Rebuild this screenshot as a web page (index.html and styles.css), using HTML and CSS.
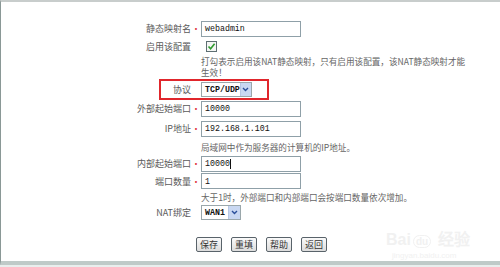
FILE: index.html
```html
<!DOCTYPE html>
<html lang="zh-CN">
<head>
    <meta charset="UTF-8">
    <title>NAT静态映射</title>
    <link rel="stylesheet" href="styles.css">
</head>
<body>
    <div class="frame">
        <div class="form">
            <div class="label">静态映射名</div><div class="star">•</div>
            <div class="field"><span class="input">webadmin</span></div>

            <div class="label">启用该配置</div><div class="star"></div>
            <div class="field">
                <span class="checkbox">
                    <svg width="9" height="9" viewBox="0 0 9 9"><path d="M1.5 4.5 L3.6 6.8 L7.6 1.8" fill="none" stroke="#2f9a2f" stroke-width="1.6"/></svg>
                </span>
            </div>

            <div class="label"></div><div class="star"></div>
            <div class="field help">
                <div class="help-line">打勾表示启用该NAT静态映射，只有启用该配置，该NAT静态映射才能</div>
                <div class="help-line">生效！</div>
            </div>

            <div class="label">协议</div><div class="star"></div>
            <div class="field">
                <span class="select">TCP/UDP<span class="drop"><svg width="7" height="5" viewBox="0 0 7 5"><path d="M1 1 L3.5 3.5 L6 1" fill="none" stroke="#2a4f9a" stroke-width="1.4"/></svg></span></span>
            </div>

            <div class="label">外部起始端口</div><div class="star">•</div>
            <div class="field"><span class="input">10000</span></div>

            <div class="label">IP地址</div><div class="star">•</div>
            <div class="field"><span class="input">192.168.1.101</span></div>

            <div class="label"></div><div class="star"></div>
            <div class="field help"><div class="help-line">局域网中作为服务器的计算机的IP地址。</div></div>

            <div class="label">内部起始端口</div><div class="star">•</div>
            <div class="field"><span class="input">10000<span class="caret"></span></span></div>

            <div class="label">端口数量</div><div class="star">•</div>
            <div class="field"><span class="input">1</span></div>

            <div class="label"></div><div class="star"></div>
            <div class="field help"><div class="help-line">大于1时，外部端口和内部端口会按端口数量依次增加。</div></div>

            <div class="label">NAT绑定</div><div class="star"></div>
            <div class="field">
                <span class="select small">WAN1<span class="drop"><svg width="7" height="5" viewBox="0 0 7 5"><path d="M1 1 L3.5 3.5 L6 1" fill="none" stroke="#2a4f9a" stroke-width="1.4"/></svg></span></span>
            </div>
        </div>

        <div class="buttons">
            <button class="btn">保存</button>
            <button class="btn">重填</button>
            <button class="btn">帮助</button>
            <button class="btn">返回</button>
        </div>

        <!-- annotation box around the protocol row -->
        <div class="highlight"></div>

        <div class="watermark">
            <div class="wm-logo">Bai<span class="paw">du</span> 经验</div>
            <div class="wm-url">jingyan.baidu.com</div>
        </div>
    </div>
</body>
</html>
```

FILE: styles.css
```css
/* Page */
body {
    margin: 0;
    padding: 0;
    background-color: #e9eeed;
    font-family: "Noto Sans CJK SC", "Liberation Sans", sans-serif;
    font-size: 9px;
    color: #555;
}

.frame {
    position: relative;
    height: 259px;
    background-color: #fff;
    border-top: 2px solid #c8cdcc;
    border-left: 1px solid #8a9896;
    border-bottom: 4px solid #bfcac8;
    overflow: hidden;
}

/* Form grid */
.form {
    display: grid;
    grid-template-columns: 90px 10px 1fr;
    grid-template-rows: 19px 17px 24px 20px 19px 21px 16px 17px 18px 14px 17px;
    margin-left: 100px;
    padding-top: 17px;
}

.label {
    display: flex;
    align-items: center;
    justify-content: flex-end;
    color: #5a5a5a;
    white-space: nowrap;
}

.star {
    display: flex;
    align-items: center;
    justify-content: center;
    color: #e0303a;
    font-size: 9px;
}

.field {
    display: flex;
    align-items: center;
}

.field.help {
    flex-direction: column;
    align-items: flex-start;
    justify-content: center;
    color: #666;
    font-size: 8.6px;
}

.help-line {
    height: 11px;
    line-height: 11px;
    white-space: nowrap;
}

/* Inputs */
.input {
    display: flex;
    align-items: center;
    box-sizing: border-box;
    width: 100px;
    height: 16px;
    padding-left: 3px;
    border: 1px solid #8fa0a8;
    background-color: #fff;
    font-family: "Liberation Mono", monospace;
    font-size: 8.3px;
    color: #111;
}

.caret {
    display: inline-block;
    width: 1px;
    height: 10px;
    background-color: #111;
}

.checkbox {
    display: flex;
    align-items: center;
    justify-content: center;
    box-sizing: border-box;
    width: 11px;
    height: 11px;
    margin-left: 5px;
    border: 1px solid #5e6f73;
    background-color: #f4f6f4;
}

.select {
    display: flex;
    align-items: center;
    justify-content: space-between;
    box-sizing: border-box;
    width: 51px;
    height: 15px;
    padding-left: 3px;
    border: 1px solid #9aa7ab;
    background-color: #fff;
    font-family: "Liberation Mono", monospace;
    font-size: 8.3px;
    font-weight: bold;
    color: #111;
}

.select.small {
    width: 40px;
}

.drop {
    display: flex;
    align-items: center;
    justify-content: center;
    width: 11px;
    height: 13px;
    background-color: #c9d8f2;
    border-left: 1px solid #b7c7e4;
}

/* Buttons */
.buttons {
    display: flex;
    gap: 9px;
    margin-top: 16px;
    margin-left: 195px;
}

.btn {
    box-sizing: border-box;
    height: 15px;
    padding: 0 3px;
    border: 1px solid #59636a;
    border-radius: 2px;
    background: linear-gradient(#fafafa, #dcdcdc);
    font-family: "Noto Sans CJK SC", sans-serif;
    font-size: 9px;
    line-height: 12px;
    color: #333;
}

/* Red annotation */
.highlight {
    position: absolute;
    left: 158px;
    top: 77px;
    width: 106px;
    height: 17px;
    border: 2px solid #e0262c;
}

/* Watermark */
.watermark {
    position: absolute;
    left: 385px;
    top: 229px;
    color: #f1f1f1;
}

.wm-logo {
    font-family: "Liberation Sans", sans-serif;
    font-size: 16px;
    font-weight: bold;
    line-height: 18px;
}

.paw {
    font-size: 10px;
    border: 1px solid #f1f1f1;
    border-radius: 8px;
    padding: 0 2px;
    margin: 0 2px;
}

.wm-url {
    font-family: "Liberation Sans", sans-serif;
    font-size: 8px;
    padding-left: 6px;
}
```
